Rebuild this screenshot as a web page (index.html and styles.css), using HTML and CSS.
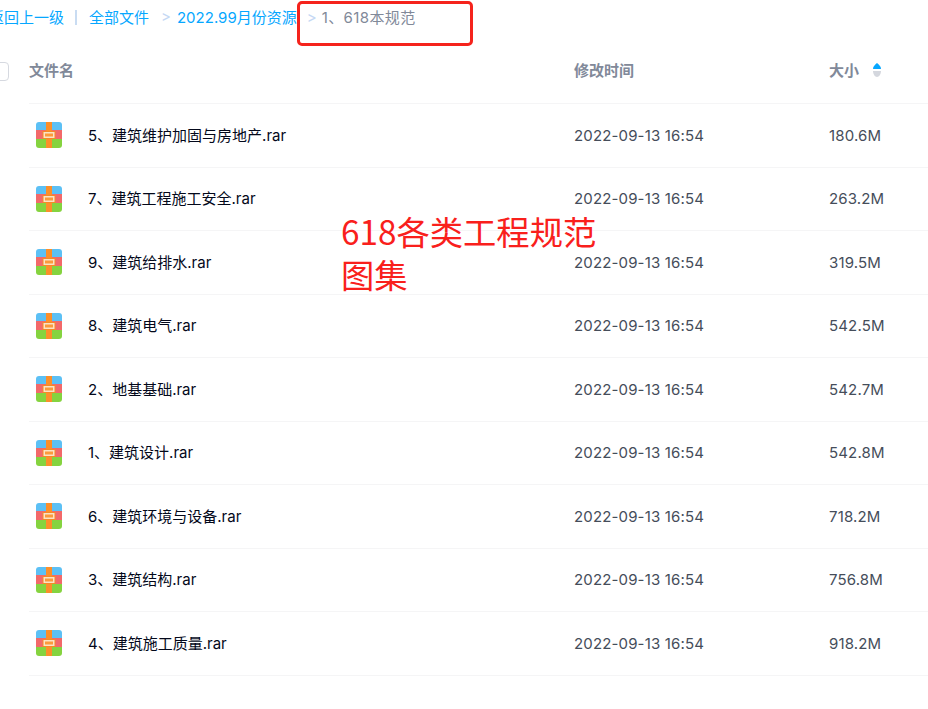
FILE: index.html
```html
<!DOCTYPE html>
<html lang="zh">
<head>
<meta charset="utf-8">
<title>1、618本规范</title>
<link rel="stylesheet" href="styles.css">
</head>
<body>
<div class="page">
  <nav class="crumbs">
    <a class="link back">返回上一级</a>
    <span class="bar"></span>
    <a class="link">全部文件</a>
    <span class="sep">&gt;</span>
    <a class="link">2022.99月份资源</a>
    <span class="sep sep-last">&gt;</span>
    <span class="current">1、618本规范</span>
  </nav>
  <div class="head">
    <span class="check"></span>
    <div class="col-name">文件名</div>
    <div class="col-time">修改时间</div>
    <div class="col-size">大小<svg class="sort" width="10" height="16" viewBox="0 0 10 16"><path d="M5 1 C3 3 1 4 1 7 H9 C9 4 7 3 5 1Z" fill="#06a7ff"/><path d="M1 9 H9 C9 12 7 15 5 15 C3 15 1 12 1 9Z" fill="#d4d7de"/></svg></div>
  </div>
  <div class="rows">
    <div class="row"><div class="col-name"><svg class="icon"><use href="#rar"/></svg>5、建筑维护加固与房地产.rar</div><div class="col-time">2022-09-13 16:54</div><div class="col-size">180.6M</div></div>
    <div class="row"><div class="col-name"><svg class="icon"><use href="#rar"/></svg>7、建筑工程施工安全.rar</div><div class="col-time">2022-09-13 16:54</div><div class="col-size">263.2M</div></div>
    <div class="row"><div class="col-name"><svg class="icon"><use href="#rar"/></svg>9、建筑给排水.rar</div><div class="col-time">2022-09-13 16:54</div><div class="col-size">319.5M</div></div>
    <div class="row"><div class="col-name"><svg class="icon"><use href="#rar"/></svg>8、建筑电气.rar</div><div class="col-time">2022-09-13 16:54</div><div class="col-size">542.5M</div></div>
    <div class="row"><div class="col-name"><svg class="icon"><use href="#rar"/></svg>2、地基基础.rar</div><div class="col-time">2022-09-13 16:54</div><div class="col-size">542.7M</div></div>
    <div class="row"><div class="col-name"><svg class="icon"><use href="#rar"/></svg>1、建筑设计.rar</div><div class="col-time">2022-09-13 16:54</div><div class="col-size">542.8M</div></div>
    <div class="row"><div class="col-name"><svg class="icon"><use href="#rar"/></svg>6、建筑环境与设备.rar</div><div class="col-time">2022-09-13 16:54</div><div class="col-size">718.2M</div></div>
    <div class="row"><div class="col-name"><svg class="icon"><use href="#rar"/></svg>3、建筑结构.rar</div><div class="col-time">2022-09-13 16:54</div><div class="col-size">756.8M</div></div>
    <div class="row"><div class="col-name"><svg class="icon"><use href="#rar"/></svg>4、建筑施工质量.rar</div><div class="col-time">2022-09-13 16:54</div><div class="col-size">918.2M</div></div>
  </div>
  <div class="redbox"></div>
  <div class="note">618各类工程规范<br>图集</div>
</div>
<svg class="defs" width="0" height="0">
  <defs>
    <symbol id="rar" viewBox="0 0 26 26">
      <clipPath id="rc"><rect width="26" height="26" rx="3"/></clipPath>
      <g clip-path="url(#rc)">
        <rect width="26" height="9" fill="#5cc0f5"/>
        <rect y="8" width="26" height="10" fill="#f2696a"/>
        <rect y="17" width="26" height="9" fill="#85d33f"/>
        <rect x="10" width="6" height="26" fill="#fb8f2a"/>
        <rect x="7" y="9.500" width="12" height="7" fill="#fbe3c4" stroke="#f58a28" stroke-width="1"/>
        <rect x="9" y="11.500" width="8" height="3" fill="#fb9a3c"/>
      </g>
    </symbol>
  </defs>
</svg>
</body>
</html>
```
FILE: styles.css
```css
* { box-sizing: border-box; }
html, body { margin: 0; background: #fff; }
body { font-family: Inter, "Noto Sans CJK SC", "Liberation Sans", sans-serif; overflow: hidden; }
.page { position: relative; width: 928px; height: 709px; overflow: hidden; }

.crumbs { display: flex; align-items: center; height: 36px; padding-bottom: 3px; margin-left: -11px; font-size: 15px; white-space: nowrap; }
.link { color: #06a7ff; }
.bar { width: 2px; height: 15px; margin: 2px 12px 0 11px; background: #c9dcf2; }
.sep { margin: 0 6px 0 12px; color: #c4d8f4; font-size: 15px; }
.sep-last { margin: 2px 5px 0 10px; }
.current { color: #818999; letter-spacing: 0.400px; }

.head, .row { display: flex; align-items: center; margin-left: 29px; border-bottom: 1px solid #f5f5f6; }
.head { position: relative; height: 68px; color: #818999; font-size: 15px; font-weight: 700; }
.row { height: 63.500px; color: #03081a; font-size: 15px; }

.check { position: absolute; left: -39px; top: 26px; width: 19px; height: 19px; border: 1px solid #d6d9e0; border-radius: 4px; }
.col-name { display: flex; align-items: center; width: 545px; flex: none; }
.col-time { width: 255px; flex: none; }
.col-size { display: flex; align-items: center; }
.row .col-name { padding-bottom: 2px; }
.row .col-time { color: #454d5a; letter-spacing: 0.150px; }
.row .col-size { color: #454d5a; letter-spacing: 0.150px; }

.icon { width: 26px; height: 26px; margin: 2px 26px 0 7px; flex: none; }
.sort { margin-left: 13px; }
.defs { position: absolute; }

.redbox { position: absolute; left: 297px; top: 1px; width: 176px; height: 45px; border: 3px solid #f5231c; border-radius: 5px; }
.note { position: absolute; left: 341px; top: 209px; width: 270px; color: #f9201c; font-family: "Noto Sans CJK SC", sans-serif; font-size: 33.300px; line-height: 43px; font-weight: 400; }
```
